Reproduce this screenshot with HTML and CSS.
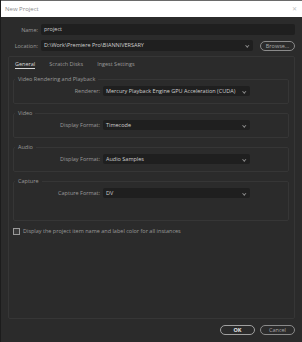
FILE: index.html
```html
<!DOCTYPE html>
<html lang="en">
<head>
  <meta charset="UTF-8" />
  <title>New Project</title>
  <link rel="stylesheet" href="styles.css">
</head>
<body>
  <div class="window">
    <div class="titlebar">
      <span>New Project</span>
      <span class="close">&#x2715;</span>
    </div>

    <div class="form">
      <div class="row">
        <span class="label">Name:</span>
        <div class="field">project</div>
      </div>
      <div class="row">
        <span class="label">Location:</span>
        <div class="field select">D:\Work\Premiere Pro\BIANNIVERSARY<span class="chev"></span></div>
        <button class="btn browse">Browse...</button>
      </div>

      <div class="panel">
        <div class="tabs">
          <span class="tab active">General</span>
          <span class="tab">Scratch Disks</span>
          <span class="tab">Ingest Settings</span>
        </div>

        <fieldset class="group">
          <legend>Video Rendering and Playback</legend>
          <div class="opt">
            <span class="optlabel">Renderer:</span>
            <div class="field select wide">Mercury Playback Engine GPU Acceleration (CUDA)<span class="chev"></span></div>
          </div>
        </fieldset>

        <fieldset class="group">
          <legend>Video</legend>
          <div class="opt">
            <span class="optlabel">Display Format:</span>
            <div class="field select wide">Timecode<span class="chev"></span></div>
          </div>
        </fieldset>

        <fieldset class="group">
          <legend>Audio</legend>
          <div class="opt">
            <span class="optlabel">Display Format:</span>
            <div class="field select wide">Audio Samples<span class="chev"></span></div>
          </div>
        </fieldset>

        <fieldset class="group tall">
          <legend>Capture</legend>
          <div class="opt">
            <span class="optlabel">Capture Format:</span>
            <div class="field select wide">DV<span class="chev"></span></div>
          </div>
        </fieldset>

        <label class="check">
          <span class="box"></span>
          Display the project item name and label color for all instances
        </label>
      </div>

      <div class="footer">
        <button class="btn ok">OK</button>
        <button class="btn">Cancel</button>
      </div>
    </div>
  </div>
</body>
</html>
```

FILE: styles.css
```css
body {
  margin: 0;
  background: #2b2b2b;
  font-family: 'Open Sans', 'Liberation Sans', sans-serif;
  font-size: 5.5px;
  color: #a8a8a8;
}

.window {
  width: 302px;
  height: 342px;
  box-sizing: border-box;
  border-left: 1px solid #1c1c1c;
  background: #2b2b2b;
}

.titlebar {
  height: 16px;
  border-top: 1px solid #6a6a6a;
  background: #fff;
  color: #8a8a8a;
  font-size: 6px;
  display: flex;
  align-items: center;
  justify-content: space-between;
  padding: 0 5px 0 4px;
}

.close {
  color: #c0c0c0;
  font-size: 5.5px;
}

.form {
  padding: 7px 7px 0 7px;
}

.row {
  display: flex;
  align-items: center;
  height: 11px;
}

.row + .row {
  margin-top: 5px;
}

.label {
  width: 30px;
  margin-right: 3px;
  text-align: right;
  color: #9a9a9a;
}

.field {
  flex: 1;
  height: 11px;
  line-height: 11px;
  box-sizing: border-box;
  padding: 0 3px;
  background: #1f1f1f;
  border-radius: 2px;
  color: #cfcfcf;
  position: relative;
}

.select {
  padding-right: 12px;
}

.chev {
  position: absolute;
  right: 5px;
  top: 3.5px;
  width: 1.5px;
  height: 1.5px;
  border-right: 1px solid #8a8a8a;
  border-bottom: 1px solid #8a8a8a;
  transform: rotate(45deg);
}

.btn {
  font-family: inherit;
  font-size: 5.5px;
  background: transparent;
  color: #a8a8a8;
  border: 1px solid #8a8a8a;
  border-radius: 6px;
  width: 35px;
  height: 10px;
  padding: 0;
  line-height: 8px;
}

.browse {
  margin-left: 7px;
}

.panel {
  margin-top: 5px;
  height: 263px;
  box-sizing: border-box;
  border: 1px solid #363636;
  border-radius: 2px;
  padding: 0 5px 0 4px;
}

.tabs {
  display: flex;
  gap: 14px;
  padding: 3px 0 0 2px;
  height: 14px;
  box-sizing: border-box;
}

.tab {
  color: #9a9a9a;
  height: 8px;
}

.tab.active {
  color: #d8d8d8;
  border-bottom: 1px solid #d8d8d8;
}

.group {
  margin: 4px 0 0 0;
  padding: 3px 0 7px 0;
  border: 1px solid #363636;
  border-radius: 2px;
  min-width: 0;
}

.group + .group {
  margin-top: 5px;
}

.group legend {
  padding: 0 3px 0 3px;
  margin-left: 1px;
  color: #9a9a9a;
}

.group.tall {
  padding-bottom: 22px;
}

.opt {
  display: flex;
  align-items: center;
}

.optlabel {
  width: 86px;
  margin-right: 3px;
  text-align: right;
  color: #9a9a9a;
}

.wide {
  flex: none;
  width: 147px;
  height: 10px;
  line-height: 10px;
}

.check {
  display: flex;
  align-items: center;
  gap: 3px;
  margin-top: 6px;
  color: #9a9a9a;
}

.box {
  width: 5px;
  height: 5px;
  border: 1px solid #9a9a9a;
  background: #3a3a3a;
}

.footer {
  display: flex;
  justify-content: flex-end;
  gap: 5px;
  margin-top: 6px;
}

.ok {
  color: #e8e8e8;
  font-weight: bold;
  border-color: #a0a0a0;
}
```
